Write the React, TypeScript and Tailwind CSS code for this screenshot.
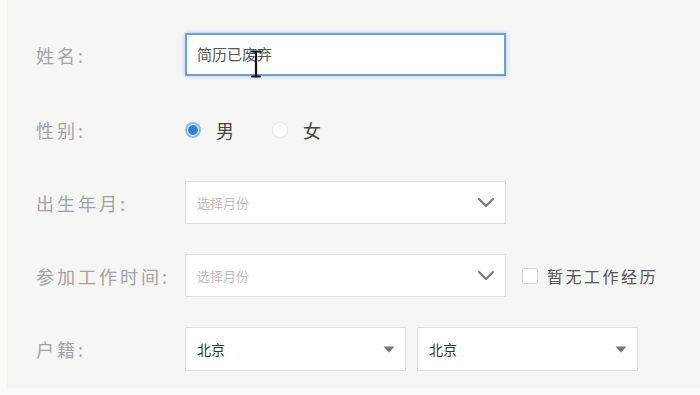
import React from "react";

const font = { fontFamily: '"Noto Sans CJK SC", "Noto Sans", sans-serif' };

function Label({ children }: { children: React.ReactNode }) {
  return (
    <div className="w-[149px] shrink-0 text-[18px] tracking-[3px] text-[#a3a3a3] leading-none">
      {children}
    </div>
  );
}

function Chevron() {
  return (
    <svg width="18" height="11" viewBox="0 0 18 11" className="shrink-0">
      <path d="M2 2 L9 9 L16 2" fill="none" stroke="#7a7a7a" strokeWidth="2.2" strokeLinecap="round" strokeLinejoin="round" />
    </svg>
  );
}

function Caret() {
  return (
    <svg width="12" height="7" viewBox="0 0 12 7" className="shrink-0">
      <path d="M0.5 0.5 L11.5 0.5 L6 6.5 Z" fill="#757575" />
    </svg>
  );
}

function IBeam() {
  return (
    <svg width="12" height="28" viewBox="0 0 12 28" className="absolute left-[63px] top-[15px]">
      <path d="M2 1.5 H10 M6 1.5 V26.5 M2 26.5 H10" fill="none" stroke="#111" strokeWidth="2.2" strokeLinecap="round" />
    </svg>
  );
}

export default function App() {
  return (
    <div className="w-[700px] h-[395px] bg-[#fafafa] overflow-hidden" style={font}>
      <div className="ml-[7px] h-[388px] bg-[#f5f5f4] pl-[29px] pt-[33px] flex flex-col">
        {/* 姓名 */}
        <div className="flex items-center h-[43px]">
          <Label>姓名:</Label>
          <div className="relative w-[321px] h-[43px] bg-white border-2 border-[#6a9fd8] shadow-[0_0_4px_rgba(80,140,220,0.45)] flex items-center pl-[10px]">
            <span className="text-[15px] text-[#555]">简历已废弃</span>
            <IBeam />
          </div>
        </div>
        {/* 性别 */}
        <div className="flex items-center h-[43px] mt-[32px]">
          <Label>性别:</Label>
          <div className="flex items-center">
            <span className="w-[16px] h-[16px] rounded-full bg-[#8fbbe8] flex items-center justify-center">
              <span className="w-[12px] h-[12px] rounded-full bg-[#2f80dd] border border-white" />
            </span>
            <span className="ml-[15px] text-[18px] text-[#444] leading-none">男</span>
            <span className="ml-[38px] w-[16px] h-[16px] rounded-full bg-white border border-[#e8e8e8]" />
            <span className="ml-[15px] text-[18px] text-[#444] leading-none">女</span>
          </div>
        </div>
        {/* 出生年月 */}
        <div className="flex items-center h-[43px] mt-[30px]">
          <Label>出生年月:</Label>
          <div className="w-[321px] h-[43px] bg-white border border-[#dedede] flex items-center justify-between pl-[11px] pr-[10px]">
            <span className="text-[13px] text-[#bdbdbd]">选择月份</span>
            <Chevron />
          </div>
        </div>
        {/* 参加工作时间 */}
        <div className="flex items-center h-[43px] mt-[30px]">
          <Label>参加工作时间:</Label>
          <div className="w-[321px] h-[43px] bg-white border border-[#dedede] flex items-center justify-between pl-[11px] pr-[10px]">
            <span className="text-[13px] text-[#bdbdbd]">选择月份</span>
            <Chevron />
          </div>
          <span className="ml-[16px] w-[16px] h-[16px] bg-white border border-[#d6d6d6] rounded-[2px]" />
          <span className="ml-[9px] text-[16px] tracking-[2.5px] text-[#555] leading-none">暂无工作经历</span>
        </div>
        {/* 户籍 */}
        <div className="flex items-center h-[44px] mt-[30px]">
          <Label>户籍:</Label>
          <div className="w-[221px] h-[44px] bg-white border border-[#dedede] flex items-center justify-between pl-[11px] pr-[10px]">
            <span className="text-[14px] text-[#333]">北京</span>
            <Caret />
          </div>
          <div className="ml-[11px] w-[221px] h-[44px] bg-white border border-[#dedede] flex items-center justify-between pl-[11px] pr-[10px]">
            <span className="text-[14px] text-[#333]">北京</span>
            <Caret />
          </div>
        </div>
      </div>
    </div>
  );
}
